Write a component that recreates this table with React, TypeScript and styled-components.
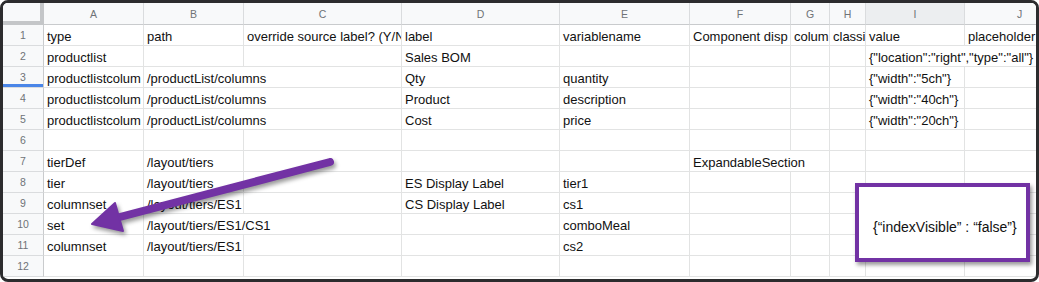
import React, { FC } from 'react'
import styled, { createGlobalStyle } from 'styled-components'

interface CellData {
  t: string
  span?: number
}

const columns = [
  { key: 'A', w: 100 },
  { key: 'B', w: 100 },
  { key: 'C', w: 158 },
  { key: 'D', w: 158 },
  { key: 'E', w: 130 },
  { key: 'F', w: 101 },
  { key: 'G', w: 39 },
  { key: 'H', w: 36 },
  { key: 'I', w: 99 },
  { key: 'J', w: 110 },
]

const rows: Record<string, CellData>[] = [
  {
    A: { t: 'type' },
    B: { t: 'path' },
    C: { t: 'override source label? (Y/N' },
    D: { t: 'label' },
    E: { t: 'variablename' },
    F: { t: 'Component disp' },
    G: { t: 'colum' },
    H: { t: 'classi' },
    I: { t: 'value' },
    J: { t: 'placeholder' },
  },
  { A: { t: 'productlist' }, D: { t: 'Sales BOM' }, I: { t: '{"location":"right","type":"all"}', span: 2 } },
  {
    A: { t: 'productlistcolum' },
    B: { t: '/productList/columns', span: 2 },
    D: { t: 'Qty' },
    E: { t: 'quantity' },
    I: { t: '{"width":"5ch"}' },
  },
  {
    A: { t: 'productlistcolum' },
    B: { t: '/productList/columns', span: 2 },
    D: { t: 'Product' },
    E: { t: 'description' },
    I: { t: '{"width":"40ch"}' },
  },
  {
    A: { t: 'productlistcolum' },
    B: { t: '/productList/columns', span: 2 },
    D: { t: 'Cost' },
    E: { t: 'price' },
    I: { t: '{"width":"20ch"}' },
  },
  {},
  { A: { t: 'tierDef' }, B: { t: '/layout/tiers' }, F: { t: 'ExpandableSection', span: 2 } },
  { A: { t: 'tier' }, B: { t: '/layout/tiers' }, D: { t: 'ES Display Label' }, E: { t: 'tier1' } },
  { A: { t: 'columnset' }, B: { t: '/layout/tiers/ES1' }, D: { t: 'CS Display Label' }, E: { t: 'cs1' } },
  { A: { t: 'set' }, B: { t: '/layout/tiers/ES1/CS1', span: 2 }, E: { t: 'comboMeal' } },
  { A: { t: 'columnset' }, B: { t: '/layout/tiers/ES1' }, E: { t: 'cs2' } },
  {},
]

const App: FC = () => {
  return (
    <>
      <GlobalStyle />
      <Frame>
        <HeaderRow>
          <Corner />
          {columns.map((c) => (
            <ColHead key={c.key} $w={c.w} $active={c.key === 'I'}>
              {c.key}
            </ColHead>
          ))}
        </HeaderRow>

        {rows.map((row, i) => (
          <Row key={i}>
            <RowHead $marked={i === 2}>{i + 1}</RowHead>
            {renderCells(row)}
          </Row>
        ))}

        <Arrow viewBox="0 0 1039 282" width={1039} height={282}>
          <line x1={330} y1={162} x2={116} y2={218} stroke="#7232a4" strokeWidth={8} strokeLinecap="round" />
          <polygon points="92,224 115,203 123,231" fill="#7232a4" stroke="#7232a4" strokeWidth={2} strokeLinejoin="round" />
        </Arrow>

        <Callout>{'{“indexVisible” : “false”}'}</Callout>
      </Frame>
    </>
  )
}

export default App

// Helpers
function renderCells(row: Record<string, CellData>) {
  const out: React.ReactNode[] = []
  let skip = 0
  columns.forEach((c, idx) => {
    if (skip > 0) {
      skip--
      return
    }
    const cell = row[c.key]
    const span = cell?.span ?? 1
    let w = 0
    for (let k = idx; k < idx + span && k < columns.length; k++) w += columns[k].w
    skip = span - 1
    out.push(
      <Cell key={c.key} $w={w}>
        {cell?.t}
      </Cell>
    )
  })
  return out
}

// Styles
const GlobalStyle = createGlobalStyle`
  html, body {
    margin: 0;
    padding: 0;
    background: #fff;
  }
  body {
    font-family: 'Liberation Sans', Arial, sans-serif;
  }
`

const Frame = styled.div`
  position: relative;
  box-sizing: border-box;
  width: 1039px;
  height: 282px;
  border: 3px solid #2c2c2e;
  border-radius: 8px;
  overflow: hidden;
  background: #fff;
`

const HeaderRow = styled.div`
  display: flex;
  height: 22px;
  background: #f8f9fa;
`

const Corner = styled.div`
  flex: none;
  box-sizing: border-box;
  width: 41px;
  height: 22px;
  background: #f8f9fa;
  border-right: 4px solid #c4c6c8;
  border-bottom: 4px solid #c4c6c8;
`

const ColHead = styled.div<{ $w: number; $active?: boolean }>`
  flex: none;
  box-sizing: border-box;
  width: ${(p) => p.$w}px;
  height: 22px;
  display: flex;
  align-items: center;
  justify-content: center;
  font-size: 10.5px;
  color: #6f7377;
  background: ${(p) => (p.$active ? '#eceef0' : '#f8f9fa')};
  border-right: 1px solid #dadcde;
  border-bottom: 1px solid #c9cbcd;
`

const Row = styled.div`
  display: flex;
  height: 21px;
`

const RowHead = styled.div<{ $marked?: boolean }>`
  flex: none;
  box-sizing: border-box;
  width: 41px;
  height: 21px;
  display: flex;
  align-items: center;
  justify-content: center;
  font-size: 10.5px;
  color: #6f7377;
  background: #f8f9fa;
  border-right: 1px solid #c9cbcd;
  border-bottom: 1px solid #dadcde;
  box-shadow: ${(p) => (p.$marked ? 'inset 0 -3px 0 #4a86e8' : 'none')};
`

const Cell = styled.div<{ $w: number }>`
  flex: none;
  box-sizing: border-box;
  width: ${(p) => p.$w}px;
  height: 21px;
  padding: 2px 3px 0 3px;
  display: flex;
  align-items: center;
  font-size: 13px;
  color: #111;
  white-space: nowrap;
  overflow: hidden;
  border-right: 1px solid #e2e3e3;
  border-bottom: 1px solid #e2e3e3;
`

const Arrow = styled.svg`
  position: absolute;
  left: -3px;
  top: -3px;
  pointer-events: none;
  filter: drop-shadow(2px 3px 2px rgba(0, 0, 0, 0.4));
`

const Callout = styled.div`
  position: absolute;
  left: 852px;
  top: 180px;
  box-sizing: border-box;
  width: 175px;
  height: 79px;
  padding: 8px 0 0 14px;
  display: flex;
  align-items: center;
  background: #fff;
  border: 4px solid #7232a4;
  box-shadow: 2px 3px 4px rgba(0, 0, 0, 0.4);
  font-size: 14px;
  color: #111;
  white-space: nowrap;
`
